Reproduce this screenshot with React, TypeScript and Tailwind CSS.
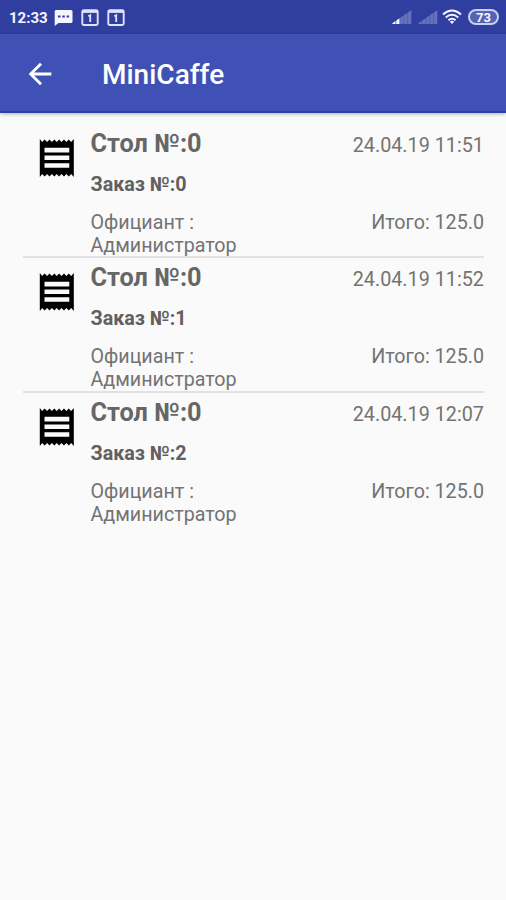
import React from "react";

const orders = [
  { id: 0, table: 0, date: "24.04.19 11:51", waiter: "Администратор", total: "125.0" },
  { id: 1, table: 0, date: "24.04.19 11:52", waiter: "Администратор", total: "125.0" },
  { id: 2, table: 0, date: "24.04.19 12:07", waiter: "Администратор", total: "125.0" },
];

const MessageIcon = () => (
  <svg width="19" height="18" viewBox="0 0 19 18">
    <path d="M2 1h15q1.500 0 1.500 1.500v10q0 1.500-1.500 1.500H4.500L.7 17V2.500Q.7 1 2 1z" fill="#f5f6ff" />
    <path d="M4 6.500h2.500v2H4zM8.300 6.500h2.500v2H8.300zM12.600 6.500h2.500v2h-2.500z" fill="#303f9f" />
  </svg>
);

const CalendarIcon = () => (
  <svg width="18" height="18" viewBox="0 0 18 18" fill="none">
    <rect x="1.300" y="1.300" width="15.400" height="14.700" rx="1.500" stroke="#dfe3fa" strokeWidth="1.900" />
    <path d="M1 2.500h16" stroke="#dfe3fa" strokeWidth="2.800" />
    <path d="M7.300 7.300l1.900-1v6.700" stroke="#dfe3fa" strokeWidth="1.800" />
  </svg>
);

const SignalIcon = ({ level }: { level: number }) => (
  <svg width="20" height="15" viewBox="0 0 20 15">
    <path d="M0 14L19.500.500V14z" fill="#505db0" />
    {[0, 1, 2, 3, 4].map((i) => (
      <path
        key={i}
        d={`M${i * 3.9 + 0.4} ${13.2 - i * 2.7}l3.100-2.200V14h-3.100z`}
        fill={i < level ? "#f5f6ff" : "#6470ba"}
      />
    ))}
  </svg>
);

const WifiIcon = () => (
  <svg width="20" height="16" viewBox="0 0 20 16" fill="none" stroke="#f5f6ff" strokeWidth="1.900">
    <path d="M1 5.500Q10-2.300 19 5.500" />
    <path d="M3.700 8.500Q10 3 16.300 8.500" />
    <path d="M6.400 11.300Q10 8 13.600 11.300" />
    <path d="M7.900 12.700Q10 11 12.100 12.700L10 15z" fill="#f5f6ff" stroke="none" />
  </svg>
);

const ReceiptIcon = () => (
  <svg width="46" height="46" viewBox="0 0 46 46">
    <path
      fillRule="evenodd"
      d="M5.800 4l2.400 2.900L10.600 4.500l2.500 2.400 2.400-2.400 2.400 2.400 2.400-2.400 2.400 2.400 2.400-2.400 2.400 2.400L30 4.500l2.400 2.400 2.400-2.400 2.400 2.400L39.800 4v38l-2.600-2.900-2.400 2.400-2.400-2.400-2.400 2.400-2.500-2.400-2.400 2.400-2.400-2.400-2.400 2.400-2.400-2.400-2.400 2.400-2.400-2.400-2.500 2.400-2.400-2.400L5.800 42zM10.500 12.800v4.600h24.800v-4.600zM10.500 20.500v4.600h24.800v-4.600zM10.500 28.200v4.600h24.800v-4.600z"
    />
  </svg>
);

const StatusBar = () => (
  <div className="flex h-[34px] items-center justify-between bg-[#303f9f] pr-[7px] pl-[9px] text-[#f5f6ff]">
    <div className="flex items-center">
      <span className="w-[45px] pt-[2px] text-[15px] font-bold">12:33</span>
      <span className="pt-[2px]">
        <MessageIcon />
      </span>
      <div className="ml-[8px] flex gap-[8px] pt-[2px]">
        <CalendarIcon />
        <CalendarIcon />
      </div>
    </div>
    <div className="flex items-center">
      <SignalIcon level={2} />
      <span className="ml-[6px]">
        <SignalIcon level={0} />
      </span>
      <span className="ml-[4px]">
        <WifiIcon />
      </span>
      <span className="ml-[6px] flex h-[16px] w-[31px] items-center justify-center rounded-full border-2 border-[#c9cff0] bg-[#5662b2] text-[13px] leading-none font-bold">
        73
      </span>
    </div>
  </div>
);

const OrderRow = ({ order }: { order: (typeof orders)[number] }) => (
  <div className="flex h-[134.500px] pt-[5px]">
    <div className="w-[56.500px] shrink-0 pt-[6px]">
      <ReceiptIcon />
    </div>
    <div className="flex-1">
      <div className="flex h-[41px] justify-between">
        <h2 className="text-[25.300px] leading-[30px] font-bold text-[#666]">Стол №:{order.table}</h2>
        <span className="pt-[5px] text-[19.800px] leading-[24px]">{order.date}</span>
      </div>
      <h3 className="h-[38px] pt-[3px] text-[19.700px] leading-[24px] font-bold text-[#606060]">
        Заказ №:{order.id}
      </h3>
      <div className="flex justify-between pt-[3px] text-[19.700px] leading-[23px]">
        <p className="w-[160px]">
          Официант : {order.waiter}
        </p>
        <span>Итого: {order.total}</span>
      </div>
    </div>
  </div>
);

const App = () => {
  return (
    <div className="flex h-[900px] w-[506px] flex-col overflow-hidden bg-[#fafafa] font-['Roboto',sans-serif] text-[#737373]">
      <StatusBar />

      {/* Toolbar */}
      <header className="flex h-[79px] items-center border-b-2 border-[#2a42a5] bg-[#3f51b5] pl-[23px] text-white shadow-[0_1px_4px_rgba(0,0,0,0.3)]">
        <button type="button" aria-label="Назад" className="mr-[45px] pt-[2px]">
          <svg width="34" height="34" viewBox="0 0 24 24" fill="currentColor">
            <path d="M20 11H7.830l5.590-5.590L12 4l-8 8 8 8 1.410-1.410L7.830 13H20v-2z" />
          </svg>
        </button>
        <h1 className="pt-[5px] text-[28px] font-medium">MiniCaffe</h1>
      </header>

      {/* Orders */}
      <main className="mr-[22px] ml-[23px] pt-[10.800px]">
        {orders.map((order, index) => (
          <div key={order.id} className={index > 0 ? "shadow-[0_-2px_0_#e2e2e2]" : ""}>
            <div className="pl-[11px]">
              <OrderRow order={order} />
            </div>
          </div>
        ))}
      </main>
    </div>
  );
};

export default App;
